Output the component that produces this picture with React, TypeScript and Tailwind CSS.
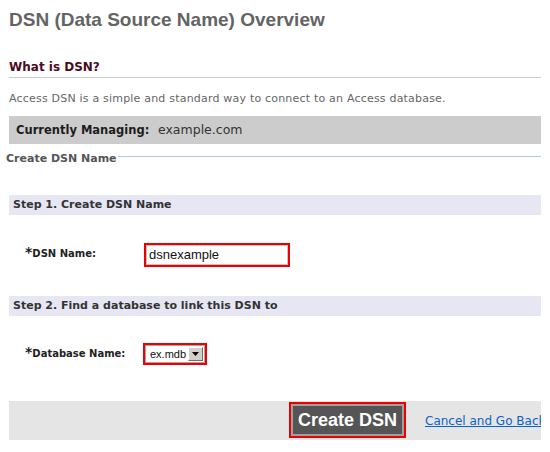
import React from "react";

const dv = { fontFamily: '"DejaVu Sans", Verdana, sans-serif' };
const ar = { fontFamily: '"Liberation Sans", Arial, sans-serif' };

export default function App() {
  return (
    <div className="w-[550px] h-[452px] bg-white overflow-hidden" style={dv}>
      <div className="w-[541px] pl-[9px]">
        <h1
          className="mt-[10px] text-[19px] leading-[19px] font-bold text-[#646464] whitespace-nowrap"
          style={ar}
        >
          DSN (Data Source Name) Overview
        </h1>

        <h2 className="mt-[32px] text-[12px] leading-[12px] font-bold text-[#4c0a1e] pb-[4px] border-b border-[#cccccc]">
          What is DSN?
        </h2>

        <p className="mt-[15px] text-[11px] leading-[11px] tracking-[0.2px] text-[#666666] whitespace-nowrap">
          Access DSN is a simple and standard way to connect to an Access database.
        </p>

        <div className="mt-[12px] h-[28px] bg-[#cccccc] pl-[7px] text-[11.5px] leading-[28px] whitespace-nowrap">
          <span className="inline-block w-[142px] font-bold text-[#1c1c1c]">Currently Managing:</span>
          <span className="text-[12.5px] text-[#333333]">example.com</span>
        </div>

        <div className="mt-[9px] -ml-[3px] flex items-start">
          <span className="text-[11px] leading-[11px] font-bold text-[#555555] whitespace-nowrap pr-[1px]">
            Create DSN Name
          </span>
          <div className="mt-[3px] flex-1 h-px bg-[#a9cbef]" />
        </div>

        <div className="mt-[31px] h-[20px] bg-[#e6e7f3] pl-[4px] text-[11px] leading-[20px] font-bold text-[#333333] whitespace-nowrap">
          Step 1. Create DSN Name
        </div>

        <div className="mt-[28px] flex items-start">
          <div className="w-[135px] pl-[16px] mt-[4px] leading-[10px] whitespace-nowrap font-bold text-[#222222]">
            <span className="text-[14px] leading-[10px]">*</span>
            <span className="text-[10px] leading-[10px]">DSN Name:</span>
          </div>
          <div className="w-[146px] h-[24px] border-2 border-[#ee0000] bg-white">
            <div
              className="h-full border border-[#c4c4c4] flex items-center pl-[2px] text-[13px] text-[#111111]"
              style={ar}
            >
              dsnexample
            </div>
          </div>
        </div>

        <div className="mt-[29px] h-[20px] bg-[#e6e7f3] pl-[4px] text-[11px] leading-[20px] font-bold text-[#333333] whitespace-nowrap">
          Step 2. Find a database to link this DSN to
        </div>

        <div className="mt-[27px] flex items-start">
          <div className="w-[134px] pl-[16px] mt-[4px] leading-[10px] whitespace-nowrap font-bold text-[#222222]">
            <span className="text-[14px] leading-[10px]">*</span>
            <span className="text-[10px] leading-[10px]">Database Name:</span>
          </div>
          <div className="w-[64px] h-[22px] border-2 border-[#ee0000] bg-white">
            <div className="h-full border border-[#a5a5a5] flex items-center pr-px" style={ar}>
              <span className="flex-1 pl-[4px] text-[11px] leading-[11px] text-[#111111]">ex.mdb</span>
              <div className="w-[15px] h-[14px] bg-[#d4d0c8] border border-t-white border-l-white border-r-[#6e6e6e] border-b-[#6e6e6e] flex items-center justify-center">
                <svg width="7" height="4" viewBox="0 0 7 4">
                  <polygon points="0,0 7,0 3.5,4" fill="#000000" />
                </svg>
              </div>
            </div>
          </div>
        </div>

        <div className="mt-[36px] h-[39px] bg-[#e5e5e5] flex items-start pl-[280px] overflow-hidden">
          <div className="mt-[1px] w-[117px] h-[36px] border-2 border-[#ee0000] shrink-0">
            <div
              className="h-full border-2 border-[#a0a0a0] bg-[#555555] flex items-center justify-center text-[18px] font-bold text-white whitespace-nowrap"
              style={ar}
            >
              Create DSN
            </div>
          </div>
          <a
            href="#"
            className="ml-[19px] mt-[14px] text-[12px] leading-[12px] text-[#0a63c9] underline whitespace-nowrap shrink-0"
          >
            Cancel and Go Back
          </a>
        </div>
      </div>
    </div>
  );
}
